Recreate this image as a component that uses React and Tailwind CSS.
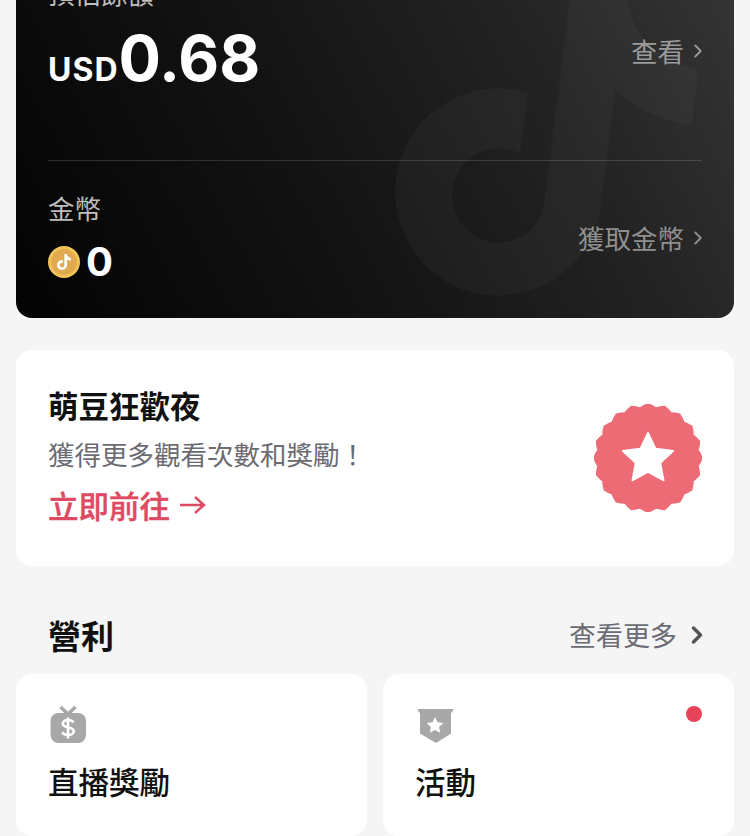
import { ChevronRight } from "lucide-react"

const note = "M12.525.02c1.31-.02 2.61-.01 3.91-.02.08 1.53.63 3.09 1.75 4.17 1.12 1.11 2.7 1.62 4.24 1.79v4.03c-1.44-.05-2.89-.35-4.2-.97-.57-.26-1.1-.59-1.62-.93-.01 2.92.01 5.84-.02 8.75-.08 1.4-.54 2.79-1.35 3.94-1.31 1.92-3.58 3.17-5.91 3.21-1.43.08-2.86-.31-4.08-1.03-2.02-1.19-3.44-3.37-3.65-5.71-.02-.5-.03-1-.01-1.49.18-1.9 1.12-3.72 2.58-4.96 1.66-1.44 3.98-2.13 6.15-1.72.02 1.48-.04 2.96-.04 4.44-.99-.32-2.15-.23-3.02.37-.63.41-1.11 1.04-1.36 1.75-.21.51-.15 1.07-.14 1.61.24 1.64 1.82 3.02 3.5 2.87 1.12-.01 2.19-.66 2.77-1.61.19-.33.4-.67.41-1.06.1-1.79.06-3.57.07-5.36.01-4.03-.01-8.05.02-12.07z"

// scalloped edge of the badge
function scallop() {
    const n = 20
    let d = ""
    for (let i = 0; i < n; i++) {
        const a = (i / n) * Math.PI * 2 - Math.PI / 2
        const b = ((i + 0.5) / n) * Math.PI * 2 - Math.PI / 2
        const c = ((i + 1) / n) * Math.PI * 2 - Math.PI / 2
        if (i === 0) d += `M${50 + 50 * Math.cos(a)} ${50 + 50 * Math.sin(a)}`
        d += `Q${50 + 47.5 * Math.cos(b)} ${50 + 47.5 * Math.sin(b)} ${50 + 46.5 * Math.cos(a + (c - a) * 0.5)} ${50 + 46.5 * Math.sin(a + (c - a) * 0.5)}`
        d += `Q${50 + 47.5 * Math.cos(b)} ${50 + 47.5 * Math.sin(b)} ${50 + 50 * Math.cos(c)} ${50 + 50 * Math.sin(c)}`
    }
    return d + "Z"
}

function Badge() {
    return (
        <svg width="108" height="108" viewBox="0 0 100 100" className="shrink-0">
            <path d={scallop()} fill="#ed6b75" stroke="#ed6b75" strokeWidth="1.5" strokeLinejoin="round" />
            <path d="M50 26.500l7 14.700 16.500 2.200-12 11.200 3 16.200L50 63l-14.500 7.800 3-16.200-12-11.200 16.500-2.200z" fill="#fff" stroke="#fff" strokeWidth="1.5" strokeLinejoin="round" />
        </svg>
    )
}

function Coin() {
    return (
        <span className="flex h-8 w-8 shrink-0 items-center justify-center rounded-full border-[3px] border-[#f3c557] bg-[#e2aa4e]">
            <svg width="16" height="16" viewBox="0 0 24 24" fill="#fff"><path d={note} /></svg>
        </span>
    )
}

function TvIcon() {
    return (
        <svg width="40" height="38" viewBox="0 0 40 38">
            <path d="M12.500 1l7.500 7 7.500-7" fill="none" stroke="#a8a8a8" strokeWidth="3.500" />
            <rect x="2.500" y="7" width="35.500" height="30" rx="8" fill="#a8a8a8" />
            <path d="M25.500 16.500c-1-1.700-3-2.500-5.500-2.500-3 0-5.200 1.500-5.200 3.800 0 5 11 2.500 11 7.400 0 2.300-2.400 3.800-5.600 3.800-2.800 0-4.900-1-6-2.800M20 11.500v21" fill="none" stroke="#fff" strokeWidth="2.600" />
        </svg>
    )
}

function ShieldIcon() {
    return (
        <svg width="40" height="38" viewBox="0 0 40 38">
            <path d="M3 3h35v2l-2 2v20.500L21 37 5 27.500V7L3 5z" fill="#a8a8a8" />
            <path d="M20 11l2.500 5.300 5.800.8-4.200 4 1 5.700-5.100-2.800-5.100 2.800 1-5.700-4.200-4 5.800-.8z" fill="#fff" />
        </svg>
    )
}

function Beneficio({ icon, titulo, punto }) {
    return (
        <div className="relative h-[162px] flex-1 rounded-2xl bg-white pl-8 pt-8">
            {icon}
            <p className="mt-[17px] text-[30.5px] leading-10 font-medium text-[#111]">{titulo}</p>
            {punto && <span className="absolute right-8 top-8 h-4 w-4 rounded-full bg-[#e9435a]"></span>}
        </div>
    )
}

export default function App() {
    return (
        <div className="h-[836px] overflow-hidden bg-[#f5f5f5] px-4 font-['Noto_Sans_CJK_TC',sans-serif]">
            <section className="relative -mt-[44px] h-[362px] overflow-hidden rounded-2xl bg-[linear-gradient(62deg,#030303_0%,#131313_40%,#232323_72%,#363636_100%)] px-8 text-white">
                <svg width="330" height="331" viewBox="0 0 24 24" preserveAspectRatio="none" fill="#fff" fillOpacity="0.03" className="absolute left-[365px] top-[14px] rotate-[7deg]">
                    <path d={note} />
                </svg>
                <div className="relative flex h-[205px] flex-col border-b border-white/15">
                    <p className="mt-[18px] text-[26.5px] leading-[38px] text-[#bdbdbd]">預估餘額</p>
                    <div className="mt-[10px] flex items-center justify-between">
                        <p className="flex items-baseline font-['Inter',sans-serif] font-bold">
                            <span className="text-[32px] tracking-[1px]">USD</span>
                            <span className="text-[63px] leading-[72px]">0.68</span>
                        </p>
                        <a className="-mt-[14px] flex items-center text-[26.5px] leading-9 text-[#9a9a9a]">查看<ChevronRight size={22} strokeWidth={2} className="ml-[3px] -mr-[7px]" /></a>
                    </div>
                </div>
                <div className="relative flex items-center justify-between pt-7">
                    <div>
                        <p className="text-[26.5px] leading-[38px] text-[#bdbdbd]">金幣</p>
                        <div className="mt-[15px] flex items-center gap-[6px]">
                            <Coin />
                            <span className="font-['Inter',sans-serif] text-[40px] leading-10 font-bold">0</span>
                        </div>
                    </div>
                    <a className="mt-1 flex items-center text-[26.5px] leading-9 text-[#8f8f8f]">獲取金幣<ChevronRight size={22} strokeWidth={2} className="ml-[3px] -mr-[7px]" /></a>
                </div>
            </section>

            <section className="mt-8 flex h-[216px] items-center justify-between rounded-2xl bg-white pl-8 pr-8">
                <div className="pb-[7px]">
                    <h2 className="text-[30.5px] leading-10 font-bold text-[#111]">萌豆狂歡夜</h2>
                    <p className="mt-[9px] text-[26.5px] leading-10 text-[#6b6c73]">獲得更多觀看次數和獎勵！</p>
                    <a className="mt-[11px] flex items-center text-[30.5px] leading-10 font-medium text-[#de4a63] [-webkit-text-stroke:0.4px_#de4a63]">
                        立即前往
                        <svg width="26" height="20" viewBox="0 0 26 20" fill="none" stroke="currentColor" strokeWidth="2.4" className="ml-[10px]">
                            <path d="M0 10H24M15 2l9 8-9 8" />
                        </svg>
                    </a>
                </div>
                <Badge />
            </section>

            <div className="flex h-[108px] items-center justify-between pl-8 pr-8 pt-[30px]">
                <h2 className="text-[33px] leading-10 font-bold text-[#111]">營利</h2>
                <a className="flex items-center text-[27px] leading-9 text-[#6b6c73]">查看更多<ChevronRight size={28} strokeWidth={3} className="ml-[6px] -mr-[9px] text-[#555]" /></a>
            </div>

            <div className="flex gap-4">
                <Beneficio icon={<TvIcon />} titulo="直播獎勵" />
                <Beneficio icon={<ShieldIcon />} titulo="活動" punto />
            </div>
        </div>
    )
}
